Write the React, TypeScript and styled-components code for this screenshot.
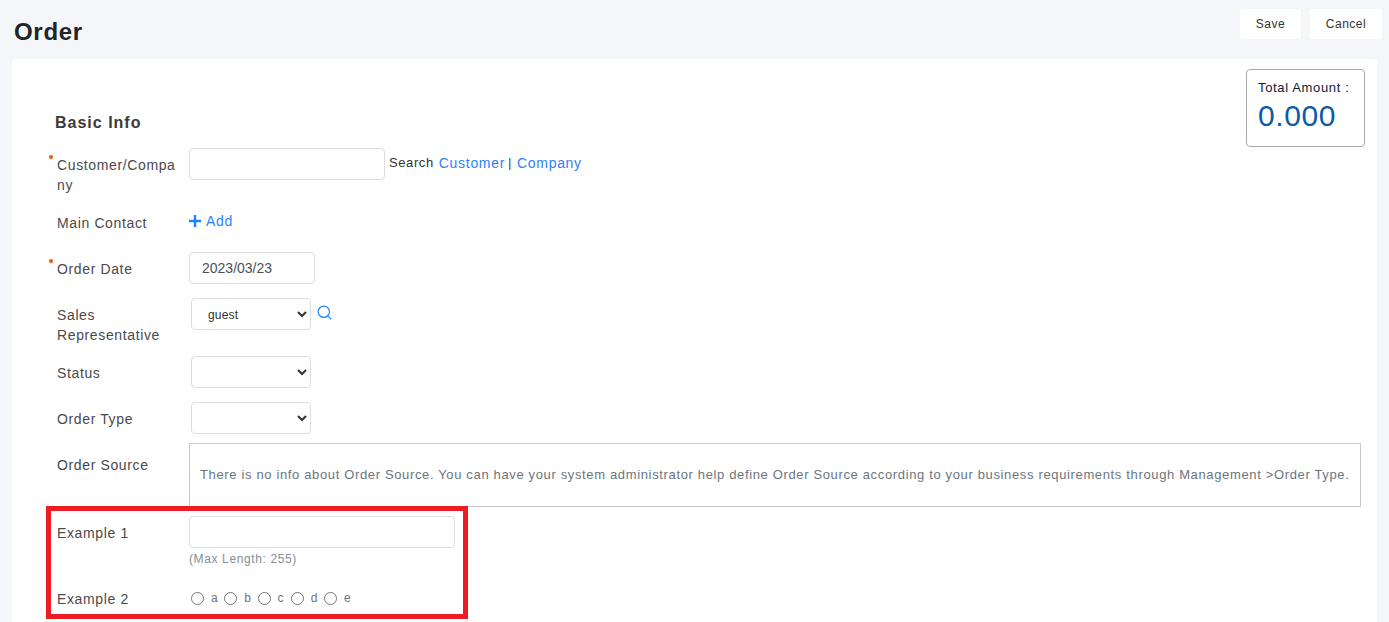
import React from 'react'
import styled, { createGlobalStyle } from 'styled-components'
import { Search } from 'lucide-react'

const GlobalStyle = createGlobalStyle`
  html, body {
    margin: 0;
    height: 100%;
    overflow: hidden;
    background: #f5f6fa;
  }
  body, input, select, button {
    font-family: "Liberation Sans", Arial, sans-serif;
  }
`

const Page = styled.div`
  height: 622px;
  display: flex;
  flex-direction: column;
  overflow: hidden;
`

const Header = styled.header`
  height: 59px;
  flex: none;
  display: flex;
  justify-content: space-between;
  align-items: flex-start;
  padding: 9px 7px 0 14px;
  box-sizing: border-box;
`

const Title = styled.h1`
  margin: 9px 0 0;
  font-size: 24px;
  line-height: 28px;
  font-weight: 700;
  letter-spacing: 0.7px;
  color: #212529;
`

const Actions = styled.div`
  display: flex;
  gap: 9px;
`

const ActionButton = styled.button<{ $width: number }>`
  width: ${({ $width }) => $width}px;
  height: 30px;
  padding: 0;
  border: none;
  border-radius: 3px;
  background: #fff;
  color: #333;
  font-size: 12px;
  letter-spacing: 0.5px;
`

const Card = styled.main`
  position: relative;
  flex: 1;
  margin: 0 12px;
  padding: 52px 16px 0 43px;
  background: #fff;
  border-radius: 4px 4px 0 0;
`

const TotalBox = styled.div`
  position: absolute;
  top: 10px;
  right: 12px;
  width: 119px;
  height: 78px;
  box-sizing: border-box;
  padding: 10px 11px;
  border: 1px solid #aaa;
  border-radius: 4px;
`

const TotalLabel = styled.div`
  font-size: 13px;
  line-height: 16px;
  letter-spacing: 0.65px;
  white-space: nowrap;
  color: #0b1a33;
`

const TotalValue = styled.div`
  margin-top: 1px;
  font-size: 30px;
  line-height: 38px;
  letter-spacing: 0.6px;
  color: #0d5aa7;
`

const SectionTitle = styled.h2`
  margin: 0 0 17px;
  height: 20px;
  font-size: 16px;
  line-height: 24px;
  font-weight: 700;
  letter-spacing: 1px;
  color: #3a3a3a;
`

const Row = styled.div<{ $gap: number }>`
  display: flex;
  align-items: flex-start;
  margin-bottom: ${({ $gap }) => $gap}px;
`

const Label = styled.div<{ $required?: boolean; $top?: number }>`
  position: relative;
  flex: none;
  width: 120px;
  margin: 0 12px 0 2px;
  padding-top: ${({ $top }) => $top ?? 7}px;
  font-size: 14px;
  line-height: 20px;
  letter-spacing: 0.63px;
  color: #4a4a4a;
  word-break: break-all;

  &::before {
    content: '';
    display: ${({ $required }) => ($required ? 'block' : 'none')};
    position: absolute;
    top: 7px;
    left: -8px;
    width: 4px;
    height: 4px;
    border-radius: 50%;
    background: #e8590c;
  }
`

const LabelLine = styled.span`
  word-break: normal;
`

const TextInput = styled.input<{ $width: number }>`
  width: ${({ $width }) => $width}px;
  height: 32px;
  box-sizing: border-box;
  padding: 0 12px;
  border: 1px solid #ddd;
  border-radius: 4px;
  background: #fff;
  color: #495057;
  font-size: 14px;
  outline: none;
`

const SelectBox = styled.select`
  width: 120px;
  height: 32px;
  margin-left: 2px;
  box-sizing: border-box;
  padding: 1px 12px 0;
  border: 1px solid #ddd;
  border-radius: 4px;
  background: #fff;
  color: #333;
  font-size: 12px;
  letter-spacing: 0.2px;
  outline: none;
`

const Inline = styled.div<{ $top?: number }>`
  display: flex;
  align-items: center;
  padding-top: ${({ $top }) => $top ?? 0}px;
  font-size: 14px;
  line-height: 20px;
  letter-spacing: 0.5px;
  color: #333;
`

const SearchText = styled.span`
  margin-left: 4px;
  font-size: 13px;
  letter-spacing: 0.6px;
`

const LinkText = styled.span<{ $left?: number }>`
  margin-left: ${({ $left }) => $left ?? 0}px;
  letter-spacing: 0.7px;
  color: #2b7fff;
`

const Divider = styled.span`
  margin: 0 5px 0 3px;
  font-size: 13px;
  color: #1c4f8a;
`

const IconLink = styled.span<{ $left?: number; $top?: number }>`
  display: inline-flex;
  align-items: center;
  margin-left: ${({ $left }) => $left ?? 0}px;
  margin-top: ${({ $top }) => $top ?? 0}px;
  color: #1a85ff;
`

const NoticeBox = styled.div`
  flex: 1;
  height: 64px;
  box-sizing: border-box;
  display: flex;
  align-items: center;
  padding: 0 10px 2px;
  border: 1px solid #c8c8c8;
  font-size: 13px;
  letter-spacing: 0.645px;
  color: #6c757d;
  white-space: nowrap;
  overflow: hidden;
`

const FieldColumn = styled.div`
  display: flex;
  flex-direction: column;
`

const Hint = styled.div`
  margin-top: 4px;
  font-size: 12px;
  line-height: 14px;
  letter-spacing: 0.62px;
  color: #868e96;
`

const RadioGroup = styled.div`
  display: flex;
  padding: 9px 0 0 2px;
`

const RadioItem = styled.label`
  display: flex;
  align-items: center;
  width: 33.25px;
  font-size: 12px;
  line-height: 14px;
  letter-spacing: 0.5px;
  color: #6c757d;
`

const RadioInput = styled.input`
  width: 13px;
  height: 13px;
  margin: 0 7px 0 0;
`

const Highlight = styled.div`
  position: absolute;
  left: 34px;
  top: 447px;
  width: 422px;
  height: 113px;
  box-sizing: border-box;
  border: 5px solid #ed1c24;
  pointer-events: none;
`

const RADIOS = ['a', 'b', 'c', 'd', 'e']

export default function App() {
  return (
    <Page>
      <GlobalStyle />
      <Header>
        <Title>Order</Title>
        <Actions>
          <ActionButton $width={61}>Save</ActionButton>
          <ActionButton $width={72}>Cancel</ActionButton>
        </Actions>
      </Header>
      <Card>
        <TotalBox>
          <TotalLabel>Total Amount :</TotalLabel>
          <TotalValue>0.000</TotalValue>
        </TotalBox>
        <SectionTitle>Basic Info</SectionTitle>

        <Row $gap={11}>
          <Label $required>Customer/Company</Label>
          <TextInput $width={196} />
          <Inline $top={5}>
            <SearchText>Search</SearchText>
            <LinkText $left={5}>Customer</LinkText>
            <Divider>|</Divider>
            <LinkText>Company</LinkText>
          </Inline>
        </Row>

        <Row $gap={19}>
          <Label>Main Contact</Label>
          <Inline $top={5}>
            <IconLink>
              <svg width="12" height="12" viewBox="0 0 12 12" aria-hidden="true">
                <path d="M6 0v12M0 6h12" stroke="currentColor" strokeWidth="2.4" fill="none" />
              </svg>
            </IconLink>
            <LinkText $left={5}>Add</LinkText>
          </Inline>
        </Row>

        <Row $gap={14}>
          <Label $required>Order Date</Label>
          <TextInput $width={126} defaultValue="2023/03/23" />
        </Row>

        <Row $gap={11}>
          <Label>
            <LabelLine>Sales Representative</LabelLine>
          </Label>
          <SelectBox defaultValue="guest">
            <option value="guest">guest</option>
          </SelectBox>
          <IconLink $left={5} $top={6}>
            <Search size={17} strokeWidth={1.7} />
          </IconLink>
        </Row>

        <Row $gap={14}>
          <Label>Status</Label>
          <SelectBox />
        </Row>

        <Row $gap={9}>
          <Label>Order Type</Label>
          <SelectBox />
        </Row>

        <Row $gap={9}>
          <Label $top={12}>Order Source</Label>
          <NoticeBox>
            There is no info about Order Source. You can have your system administrator help define Order Source according to your business requirements through Management &gt;Order Type.
          </NoticeBox>
        </Row>

        <Row $gap={16}>
          <Label>Example 1</Label>
          <FieldColumn>
            <TextInput $width={266} />
            <Hint>(Max Length: 255)</Hint>
          </FieldColumn>
        </Row>

        <Row $gap={0}>
          <Label>Example 2</Label>
          <RadioGroup>
            {RADIOS.map(option => (
              <RadioItem key={option}>
                <RadioInput type="radio" name="example2" />
                {option}
              </RadioItem>
            ))}
          </RadioGroup>
        </Row>

        <Highlight />
      </Card>
    </Page>
  )
}
